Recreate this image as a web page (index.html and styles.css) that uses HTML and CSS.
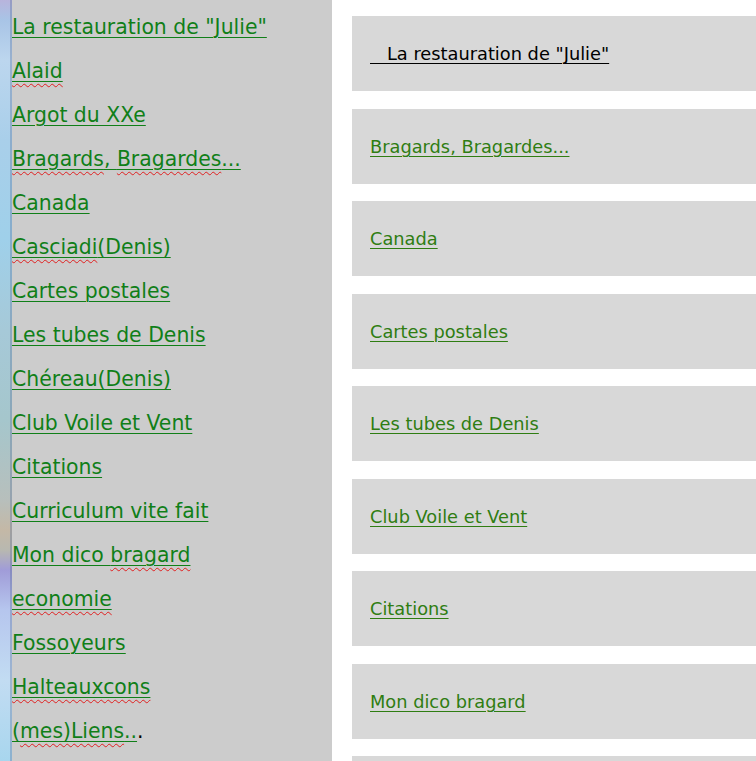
FILE: index.html
```html
<!DOCTYPE html>
<html lang="fr">
<head>
<meta charset="utf-8">
<title>Sommaire</title>
<link rel="stylesheet" href="styles.css">
</head>
<body>
<div class="page">
  <nav class="sidebar">
    <div class="strip"></div>
    <ul class="menu">
      <li><a href="#">La restauration de "Julie"</a></li>
      <li><a href="#"><span class="sp">Alaid</span></a></li>
      <li><a href="#">Argot du XXe</a></li>
      <li><a href="#"><span class="sp">Bragards</span>, <span class="sp">Bragardes</span>...</a></li>
      <li><a href="#">Canada</a></li>
      <li><a href="#"><span class="sp">Casciadi</span>(Denis)</a></li>
      <li><a href="#">Cartes postales</a></li>
      <li><a href="#">Les tubes de Denis</a></li>
      <li><a href="#">Chéreau(Denis)</a></li>
      <li><a href="#">Club Voile et Vent</a></li>
      <li><a href="#">Citations</a></li>
      <li><a href="#">Curriculum vite fait</a></li>
      <li><a href="#">Mon dico <span class="sp">bragard</span></a></li>
      <li><a href="#"><span class="sp">economie</span></a></li>
      <li><a href="#">Fossoyeurs</a></li>
      <li><a href="#"><span class="sp">Halteauxcons</span></a></li>
      <li><a href="#">(<span class="sp">mes)Liens</span>..</a>.</li>
    </ul>
  </nav>
  <main class="content">
    <div class="card"><a class="dark" href="#">&nbsp;&nbsp;&nbsp;La restauration de "Julie"</a></div>
    <div class="card"><a href="#">Bragards, Bragardes...</a></div>
    <div class="card"><a href="#">Canada</a></div>
    <div class="card"><a href="#">Cartes postales</a></div>
    <div class="card"><a href="#">Les tubes de Denis</a></div>
    <div class="card"><a href="#">Club Voile et Vent</a></div>
    <div class="card"><a href="#">Citations</a></div>
    <div class="card"><a href="#">Mon dico bragard</a></div>
    <div class="card"></div>
  </main>
</div>
</body>
</html>
```

FILE: styles.css
```css
html, body {
  margin: 0;
  padding: 0;
  background: #ffffff;
  overflow: hidden;
  height: 761px;
}

.page {
  display: flex;
  align-items: flex-start;
  height: 761px;
  font-family: "DejaVu Sans", Verdana, sans-serif;
}

.sidebar {
  width: 332px;
  flex: 0 0 332px;
  height: 761px;
  background: #cccccc;
  display: flex;
}

.strip {
  width: 12px;
  flex: 0 0 12px;
  background: linear-gradient(180deg,
    #b8b4dc 0px, #a8c4e6 20px, #bcd6ee 60px, #a9cfea 140px,
    #9fd0ea 240px, #a6c9d8 330px, #a5c6cc 420px, #b7bfbc 500px,
    #c4b8a6 530px, #b8b8b0 550px, #a09cd8 570px, #b6c6ee 610px,
    #c2dcf2 680px, #a8d6ee 761px);
  box-shadow: inset -2px 0 0 rgba(90, 110, 150, 0.35);
}

.menu {
  list-style: none;
  margin: 0;
  padding: 5px 0 0 0;
}

.menu li {
  height: 44px;
  line-height: 44px;
  font-size: 20.4px;
  white-space: nowrap;
  color: #000;
}

.menu a {
  color: #107f18;
  text-decoration: underline;
  text-decoration-thickness: 1px;
  text-underline-offset: 3px;
}

.sp {
  text-decoration: underline wavy #e02020;
  text-decoration-thickness: 1px;
  text-underline-offset: 5px;
}

.content {
  flex: 1;
  padding: 16px 0 0 20px;
  display: flex;
  flex-direction: column;
  gap: 17.5px;
  min-width: 0;
}

.card {
  height: 75px;
  width: 420px;
  background: #d8d8d8;
  display: flex;
  align-items: center;
  padding-left: 18px;
  box-sizing: border-box;
  font-size: 17.8px;
  flex: 0 0 75px;
}

.card a {
  color: #2f7d12;
  text-decoration: underline;
  text-decoration-thickness: 1px;
  text-underline-offset: 3px;
  white-space: pre;
}

.card a.dark {
  color: #000000;
}
```
